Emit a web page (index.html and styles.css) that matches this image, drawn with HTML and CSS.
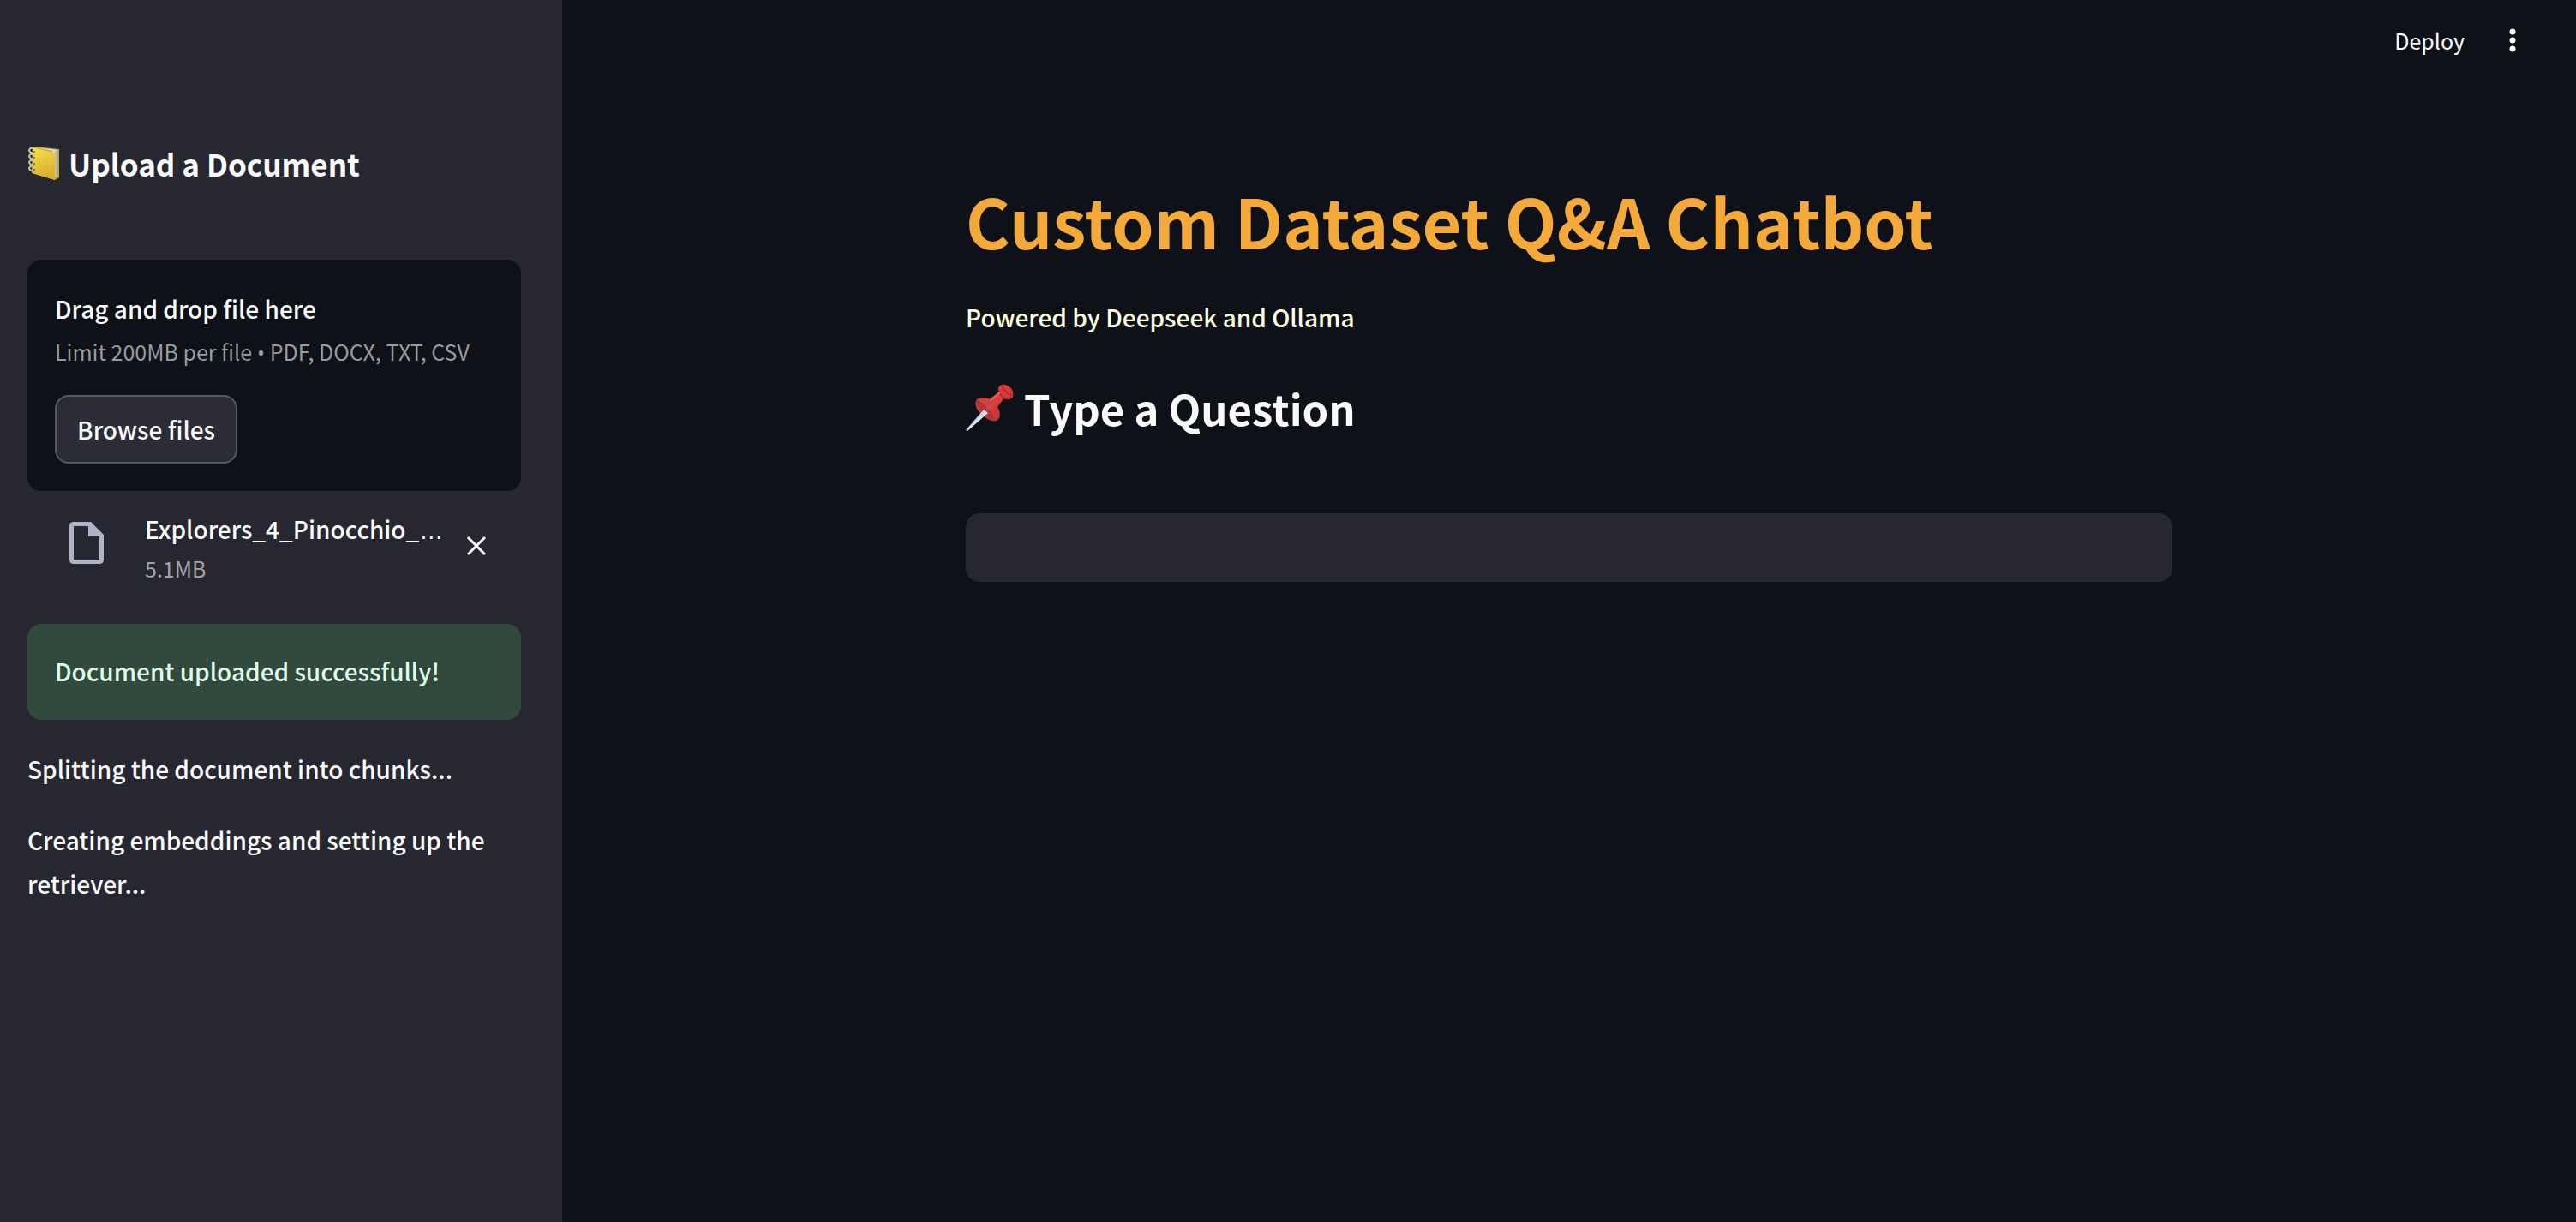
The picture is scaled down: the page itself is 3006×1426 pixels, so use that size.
FILE: index.html
```html
<!DOCTYPE html>
<html lang="en">
<head>
<meta charset="utf-8">
<meta name="viewport" content="width=device-width, initial-scale=1">
<title>Custom Dataset Q&amp;A Chatbot</title>
<link rel="stylesheet" href="styles.css">
</head>
<body>
<div class="app">
  <aside class="sidebar">
    <h2 class="sidebar-title">
      <svg class="icon-ledger" viewBox="0 0 38 42" aria-hidden="true">
        <defs>
          <linearGradient id="cover" x1="0" y1="0" x2="0.3" y2="1">
            <stop offset="0" stop-color="#f7e04f"/><stop offset="1" stop-color="#d9b02e"/>
          </linearGradient>
        </defs>
        <path d="M7 1 36 4V37L31 40 5 32Z" fill="#c9a52c"/>
        <path d="M9 2 34 5V36L31 37 28 6Z" fill="#d9dcdc"/>
        <path d="M32 6V37" stroke="#9b9f9c" stroke-width="1"/>
        <path d="M5 2 31 8V40L4 32Z" fill="url(#cover)"/>
        <g fill="none" stroke="#c5c79b" stroke-width="2">
          <path d="M7 4C2 1 0 5 2 7S6 8 7 7"/><path d="M7 11C2 8 0 12 2 14S6 15 7 14"/>
          <path d="M7 18C2 15 0 19 2 21S6 22 7 21"/><path d="M7 25C2 22 0 26 2 28S6 29 7 28"/>
        </g>
        <g fill="#7a6b22"><circle cx="7" cy="7" r="1"/><circle cx="7" cy="14" r="1"/><circle cx="7" cy="21" r="1"/><circle cx="7" cy="28" r="1"/></g>
      </svg>
      <span>Upload a Document</span>
    </h2>
    <section class="dropzone" aria-label="File upload">
      <p>Drag and drop file here</p>
      <p class="hint">Limit 200MB per file <span class="bullet">•</span> PDF, DOCX, TXT, CSV</p>
      <button class="browse" type="button">Browse files</button>
    </section>
    <div class="file">
      <svg class="icon-file" viewBox="0 0 40 50" aria-hidden="true">
        <path fill-rule="evenodd" d="M5 0H25L40 15V44Q40 49 35 49H5Q0 49 0 44V5Q0 0 5 0ZM5 5V44H35V17H22V5Z" fill="#b0b3c5"/>
      </svg>
      <div class="file-info">
        <div class="file-name">Explorers_4_Pinocchio_<span class="ellipsis">…</span></div>
        <div class="file-size">5.1MB</div>
      </div>
      <button class="remove" type="button" aria-label="Remove file">
        <svg viewBox="0 0 24 24" aria-hidden="true"><path d="M2 2 22 22M22 2 2 22" stroke="#fafafa" stroke-width="3"/></svg>
      </button>
    </div>
    <div class="success" role="status">Document uploaded successfully!</div>
    <p class="status">Splitting the document into chunks...</p>
    <p class="status">Creating embeddings and setting up the retriever...</p>
  </aside>
  <div class="page">
    <header class="toolbar">
      <button class="deploy" type="button">Deploy</button>
      <button class="menu" type="button" aria-label="Main menu">
        <svg viewBox="0 0 8 28" aria-hidden="true"><g fill="#fafafa"><circle cx="4" cy="4" r="3.5"/><circle cx="4" cy="14" r="3.5"/><circle cx="4" cy="24" r="3.5"/></g></svg>
      </button>
    </header>
    <main class="content">
      <h1>Custom Dataset Q&amp;A Chatbot</h1>
      <p class="tagline">Powered by Deepseek and Ollama</p>
      <h2 class="question-title">
        <svg class="icon-pin" viewBox="0 0 56 56" aria-hidden="true">
          <defs>
            <linearGradient id="needle" x1="0" y1="0" x2="1" y2="1">
              <stop offset="0.3" stop-color="#86b4d8"/><stop offset="0.55" stop-color="#e4eaf0"/><stop offset="0.8" stop-color="#4a4e55"/>
            </linearGradient>
            <linearGradient id="pin" x1="0" y1="0" x2="1" y2="1">
              <stop offset="0" stop-color="#cf3f3d"/><stop offset="0.5" stop-color="#dc3d39"/><stop offset="1" stop-color="#a02c2d"/>
            </linearGradient>
          </defs>
          <path d="M12 20C14 15 24 16 28 18L39 9C36 4 41 0 46 1C53 3 57 9 55 15C53 19 47 19 45 16L37 27C41 32 41 41 36 43C29 46 8 31 12 20Z" fill="url(#pin)"/>
          <path d="M13 19C17 19 29 29 34 42C26 43 10 29 13 19Z" fill="#b13335"/>
          <path d="M39 9C41 14 44 17 47 17M42 3C45 8 50 13 55 13" fill="none" stroke="#b62e2e" stroke-width="2"/>
          <path d="M28 20 40 10" stroke="#e95f57" stroke-width="2"/>
          <path d="M24 30 33 22" stroke="#b65068" stroke-width="2"/>
          <path d="M21 30 26 34 2 55 0 54Z" fill="url(#needle)"/>
        </svg>
        <span>Type a Question</span>
      </h2>
      <input class="question" type="text" aria-label="Question">
    </main>
  </div>
</div>
</body>
</html>
```
FILE: styles.css
```css
*, *::before, *::after { box-sizing: border-box; }

body {
  margin: 0;
  background: #0e1117;
  color: #fafafa;
  font-family: "Noto Sans CJK SC", "Noto Sans", sans-serif;
  font-size: 28px;
  font-weight: 500;
  line-height: 51px;
}

h1, h2, p { margin: 0; }

button {
  font: inherit;
  color: inherit;
  background: none;
  border: 0;
  padding: 0;
}

svg { display: block; }

.app {
  display: flex;
  min-height: 100vh;
}

.sidebar {
  flex: none;
  width: 656px;
  background: #262730;
  padding: 166px 48px 48px 32px;
}

.sidebar-title {
  display: flex;
  align-items: center;
  gap: 8px;
  font-size: 35px;
  line-height: 50px;
  margin-bottom: 87px;
}

.icon-ledger { width: 40px; height: 42px; }

.dropzone {
  background: #0e1117;
  border-radius: 16px;
  padding: 32px;
  line-height: 50px;
}

.hint {
  color: #999a9c;
  font-size: 25px;
  font-weight: 400;
}

.bullet,
.ellipsis { line-height: 1; }

.bullet { font-family: "Open Sans", sans-serif; }

.ellipsis { font-family: "Liberation Sans", sans-serif; }

.browse {
  display: block;
  height: 80px;
  margin-top: 26px;
  padding: 0 24px;
  background: #2b2c36;
  border: 2px solid #555660;
  border-radius: 16px;
}

.file {
  display: flex;
  align-items: center;
  padding: 16px 40px 0 49px;
  margin-bottom: 43px;
}

.icon-file {
  flex: none;
  width: 40px;
  height: 50px;
  margin-bottom: 6px;
}

.file-info {
  flex: 1;
  min-width: 0;
  margin: 0 16px 0 48px;
  padding-top: 4px;
}

.file-name {
  overflow: hidden;
  white-space: nowrap;
  line-height: 48px;
}

.file-size {
  color: #a3a3a6;
  font-size: 25px;
  font-weight: 400;
  line-height: 44px;
}

.remove svg { width: 24px; height: 24px; }

.success {
  background: #32493d;
  color: #dffde9;
  border-radius: 16px;
  padding: 30px 32px 31px;
}

.status { margin-top: 32px; }

.page {
  flex: 1;
  min-width: 0;
}

.toolbar {
  display: flex;
  justify-content: flex-end;
  align-items: center;
  gap: 52px;
  height: 94px;
  padding: 0 70px 0 0;
  font-size: 25px;
  font-weight: 400;
}

.menu svg { width: 8px; height: 28px; }

.content {
  max-width: 1408px;
  margin: 0 auto;
  padding-top: 110px;
}

h1 {
  color: #f4a93b;
  font-size: 79px;
  line-height: 106px;
}

.tagline {
  color: #ffffe0;
  margin-top: 35px;
}

.question-title {
  display: flex;
  align-items: center;
  gap: 12px;
  font-size: 49px;
  line-height: 66px;
  margin-top: 47px;
}

.icon-pin { width: 56px; height: 56px; }

.question {
  display: block;
  width: 100%;
  height: 80px;
  margin-top: 90px;
  padding: 0 24px;
  background: #262730;
  border: 0;
  border-radius: 16px;
  color: inherit;
  font: inherit;
}
```
